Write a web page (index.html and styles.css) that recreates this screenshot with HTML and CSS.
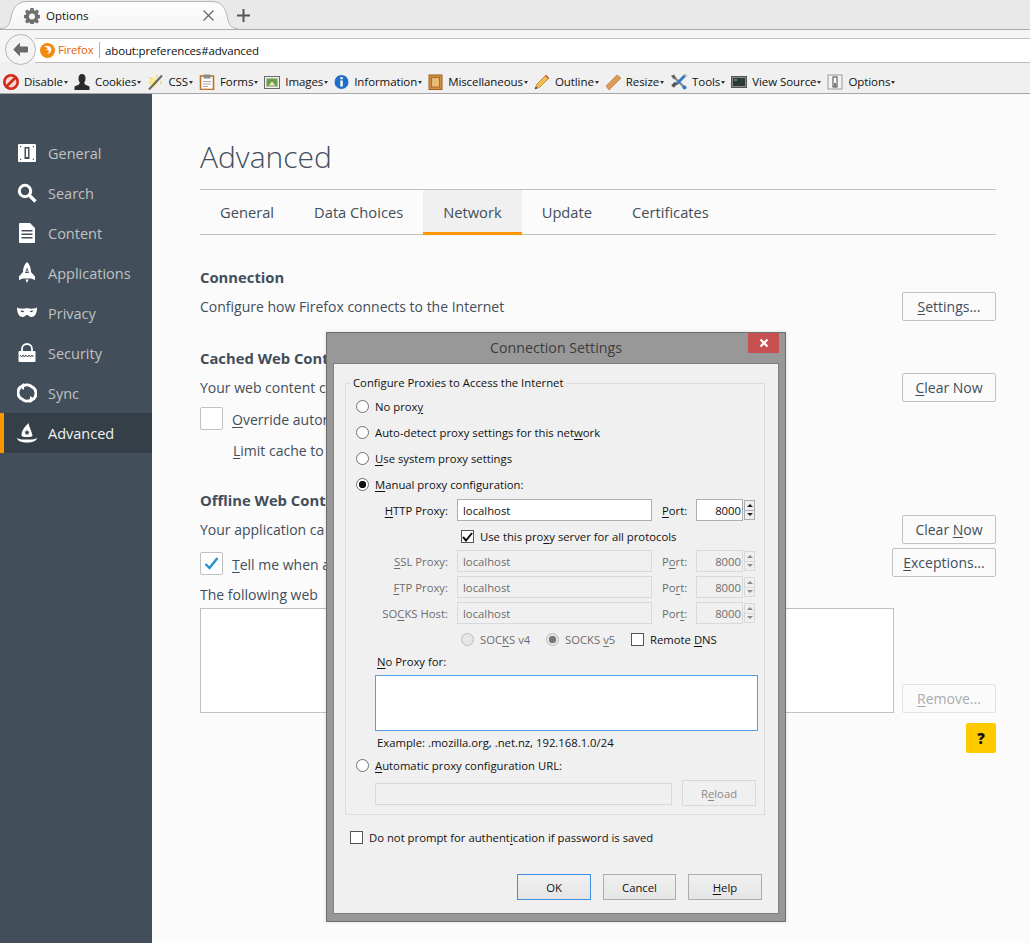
FILE: index.html
```html
<!DOCTYPE html>
<html lang="en">
<head>
    <meta charset="UTF-8">
    <title>Options</title>
    <link rel="stylesheet" href="styles.css">
</head>
<body>
    <div class="tabstrip">
        <div class="tab">
            <svg class="tab-shape" width="238" height="29" viewBox="0 0 238 29">
                <defs><linearGradient id="tabfill" x1="0" y1="0" x2="0" y2="1"><stop offset="0" stop-color="#fdfdfd"/><stop offset="1" stop-color="#f5f5f5"/></linearGradient></defs>
                <path d="M0 29C7 29 9 25 10.500 20C12 12 14 2 27 1.500H212C225 2 226 12 228 20C229.500 25 231 29 238 29Z" fill="url(#tabfill)"/>
                <path d="M0 28.500C7 28.500 9 25 10.500 20C12 12 14 2 27 1.500H212C225 2 226 12 228 20C229.500 25 231 28.500 238 28.500" fill="none" stroke="#b3b7bd"/>
            </svg>
            <svg class="tab-icon" width="16" height="16" viewBox="0 0 16 16"><path fill="#6f6f6f" d="M6.500 0h3l.4 2.200 1.300.6L13 1.500l2 2-1.300 1.900.6 1.300 2.200.4v3l-2.200.4-.6 1.300 1.300 1.800-2 2-1.800-1.300-1.300.6-.4 2.100h-3l-.4-2.100-1.300-.6L3 15.500l-2-2 1.300-1.800-.6-1.300L0 10V7l1.700-.3.6-1.300L1 3.500l2-2 1.800 1.300 1.300-.6zM8 5.500a3 3 0 1 0 0 6 3 3 0 0 0 0-6z"/></svg>
            <span class="tab-title">Options</span>
            <svg class="tab-close" width="11" height="11" viewBox="0 0 11 11"><path d="M.5.5l10 10M10.500.5l-10 10" stroke="#666" stroke-width="1.200"/></svg>
        </div>
        <svg class="new-tab" width="13" height="13" viewBox="0 0 13 13"><path d="M6.500 0v13M0 6.500h13" stroke="#555" stroke-width="2"/></svg>
    </div>

    <div class="navbar">
        <div class="back-btn">
            <svg width="15" height="13" viewBox="0 0 15 13"><path d="M6.500.5L.8 6.500l5.700 6V9h8V4h-8z" fill="#6a6a6a" stroke="#6a6a6a" stroke-linejoin="round"/></svg>
        </div>
        <div class="urlbar">
            <svg class="fx-logo" width="15" height="15" viewBox="0 0 15 15"><circle cx="7.500" cy="7.500" r="7.500" fill="#f4890f"/><path d="M4 3.500c2-1.500 6-1 7 1.500 1 3-1 6-4 6 2-1 2.500-3 1-4-1-.5-2 0-3 0 1-1 2-1.500 3-1.500-1-1-2.500-1.500-4-2z" fill="#fff"/></svg>
            <span class="fx-name">Firefox</span>
            <span class="url-text">about:preferences#advanced</span>
        </div>
    </div>

    <div class="devbar">
        <div class="dev-item"><svg width="16" height="16" viewBox="0 0 16 16"><circle cx="8" cy="8" r="6.700" fill="#f6d8d2" stroke="#d22a1c" stroke-width="2.600"/><path d="M3.500 12.500l9-9" stroke="#d22a1c" stroke-width="2.600"/></svg>Disable<i></i></div>
        <div class="dev-item"><svg width="16" height="16" viewBox="0 0 16 16"><ellipse cx="8" cy="4.500" rx="3.500" ry="4.500" fill="#2b2b2b"/><path d="M6 8h4l1 2.500 4.500 2V16H.5v-3.500L5 10.500z" fill="#2b2b2b"/></svg>Cookies<i></i></div>
        <div class="dev-item"><svg width="16" height="16" viewBox="0 0 16 16"><path d="M1 9l4-6 4 2 2 5-5 4z" fill="#f8ea8e"/><path d="M2 15.500L15 1.500" stroke="#666" stroke-width="2"/><path d="M10 1v3M14 7v3M2 3l2 2" stroke="#e8c93a"/></svg>CSS<i></i></div>
        <div class="dev-item"><svg width="16" height="16" viewBox="0 0 16 16"><rect x="1.500" y="2" width="13" height="13.500" fill="#fdfdfd" stroke="#b9752e" stroke-width="1.600"/><rect x="4.500" y="0.500" width="7" height="4" fill="#8b8b8b"/><path d="M4 7.500h8M4 10h8M4 12.500h5" stroke="#aaa"/></svg>Forms<i></i></div>
        <div class="dev-item"><svg width="16" height="16" viewBox="0 0 16 16"><rect x="0.500" y="2.500" width="15" height="12" fill="#eee" stroke="#6b6b6b"/><rect x="2.500" y="4.500" width="11" height="8" fill="#6f9a4a"/><path d="M4.500 11.500l3.500-4 3.500 4z" fill="#e9e6c3"/></svg>Images<i></i></div>
        <div class="dev-item"><svg width="15" height="16" viewBox="0 0 15 16"><circle cx="7.500" cy="8" r="7" fill="#1f6fc8"/><rect x="6.300" y="6.500" width="2.500" height="6" fill="#fff"/><rect x="6.300" y="3.200" width="2.500" height="2" fill="#fff"/></svg>Information<i></i></div>
        <div class="dev-item"><svg width="15" height="16" viewBox="0 0 15 16"><rect x="1" y="1" width="13" height="14.500" fill="#d58f3f" stroke="#9c6020"/><rect x="3.500" y="3.500" width="8" height="9.500" fill="#e8ba78" stroke="#a86c28"/></svg>Miscellaneous<i></i></div>
        <div class="dev-item"><svg width="16" height="16" viewBox="0 0 16 16"><path d="M1 15l2-5L12 1l3 3-9 9z" fill="#f0c04a" stroke="#a8742a" stroke-width=".7"/><path d="M11 2l3 3 1-1-3-3z" fill="#d9534f"/><path d="M1 15l.8-2.500 1.700 1.700z" fill="#333"/></svg>Outline<i></i></div>
        <div class="dev-item"><svg width="16" height="16" viewBox="0 0 16 16"><path d="M1 12L12 1l4 3L4 16z" fill="#dc9c56" stroke="#b87a38" stroke-width=".7"/></svg>Resize<i></i></div>
        <div class="dev-item"><svg width="17" height="16" viewBox="0 0 17 16"><path d="M2.500 1.500l12 12" stroke="#8a8a8a" stroke-width="2.400"/><path d="M1 2l3-1.500 2 3-2 2z" fill="#666"/><path d="M15 1.500L6.500 10" stroke="#2f78c4" stroke-width="2.800"/><path d="M6 9l-3.500 3.500" stroke="#555" stroke-width="3.600"/><circle cx="14.500" cy="13.500" r="2" fill="#2f78c4"/><path d="M13 .5l3.500 3 .5-2.500-1-1z" fill="#bbb"/></svg>Tools<i></i></div>
        <div class="dev-item"><svg width="16" height="16" viewBox="0 0 16 16"><rect x="0.500" y="2.500" width="15" height="11" fill="#8a8a8a" stroke="#555"/><rect x="2" y="4" width="12" height="8" fill="#2a3a34"/><path d="M3 6h3" stroke="#9ccc65"/></svg>View Source<i></i></div>
        <div class="dev-item"><svg width="16" height="16" viewBox="0 0 16 16"><rect x="1" y="1" width="14" height="14" fill="#f4f4f4" stroke="#9a9a9a"/><rect x="6" y="3" width="4" height="10" fill="#fff" stroke="#444"/><rect x="7" y="9" width="2" height="4" fill="#777"/></svg>Options<i></i></div>
    </div>

    <div class="prefs">
        <nav class="sidebar">
            <div class="cat">
                <svg width="20" height="20" viewBox="0 0 20 20"><path fill-rule="evenodd" d="M2 1h16a1 1 0 0 1 1 1v16a1 1 0 0 1-1 1H2a1 1 0 0 1-1-1V2a1 1 0 0 1 1-1zm5.500 3v12h5V4zm1.500 1.500h2V14H9zM3 3v1.200h1.200V3zm12.800 0v1.200H17V3zM3 15.800V17h1.200v-1.200zm12.800 0V17H17v-1.200z" fill="#fff"/></svg>
                General
            </div>
            <div class="cat">
                <svg width="20" height="20" viewBox="0 0 20 20"><circle cx="8" cy="8" r="5.700" fill="none" stroke="#fff" stroke-width="3"/><path d="M12.500 12.500l6 6" stroke="#fff" stroke-width="3.400"/></svg>
                Search
            </div>
            <div class="cat">
                <svg width="20" height="20" viewBox="0 0 20 20"><path fill-rule="evenodd" d="M3 0h10l5 5v14a1 1 0 0 1-1 1H3a1 1 0 0 1-1-1V1a1 1 0 0 1 1-1zm1.500 7v1.500h11V7zm0 3.500V12h11v-1.500zm0 3.500v1.500h11V14z" fill="#fff"/></svg>
                Content
            </div>
            <div class="cat">
                <svg width="20" height="22" viewBox="0 0 20 22"><path fill-rule="evenodd" d="M10 0c2.500 2 4 6 4 10l4 4.500V18l-4-1.500H6L2 18v-3.500L6 10c0-4 1.500-8 4-10zm0 5.500L8 11h4zm0 2.500l.8 2H9.200z" fill="#fff"/><path d="M8.500 17.500h3L10 21z" fill="#fff"/></svg>
                Applications
            </div>
            <div class="cat">
                <svg width="20" height="20" viewBox="0 0 20 20"><path fill-rule="evenodd" d="M0 4.500c3 1.500 7 1.500 10 .5 3 1 7 1 10-.5 0 5.500-2 9.500-5.500 9.500-2.500 0-3-2-4.500-2s-2 2-4.500 2C2 14 0 10 0 4.500zm3.500 3.500c.8 1.400 2.800 1.500 3.800.5-1-1-2.800-1.300-3.800-.5zm13 0c-1-.8-2.800-.5-3.800.5 1 1 3 .9 3.800-.5z" fill="#fff"/></svg>
                Privacy
            </div>
            <div class="cat">
                <svg width="20" height="20" viewBox="0 0 20 20"><path d="M5 9V6a5 5 0 0 1 10 0v3" fill="none" stroke="#fff" stroke-width="1.800"/><rect x="1.500" y="8" width="17" height="11" rx="1" fill="#fff"/><path d="M3 12l1.500 2 1.500-2 1.500 2 1.500-2 1.500 2 1.500-2 1.500 2 1.500-2 1.500 2" fill="none" stroke="#424f5a"/></svg>
                Security
            </div>
            <div class="cat">
                <svg width="20" height="20" viewBox="0 0 20 20"><path d="M15.500 4.500A7.500 7.500 0 0 0 6 3" fill="none" stroke="#fff" stroke-width="3"/><path d="M4.500 16A7.500 7.500 0 0 1 3.500 4" fill="none" stroke="#fff" stroke-width="3"/><path d="M4.500 15.500A7.500 7.500 0 0 0 14 17" fill="none" stroke="#fff" stroke-width="3"/><path d="M15.500 4A7.500 7.500 0 0 1 16.500 16" fill="none" stroke="#fff" stroke-width="3"/><path d="M7 0v7L2 3.500zM13 20v-7l5 3.500z" fill="#fff"/></svg>
                Sync
            </div>
            <div class="cat selected">
                <svg width="20" height="20" viewBox="0 0 20 20"><path fill-rule="evenodd" d="M12 0c-1 2 2.500 7 3.500 12.500.3 2-11 2-11 0C4.500 7.500 8 3 12 0zm-2 6.500l-.8 2-2 .2 1.500 1.300-.4 2 1.700-1.100 1.700 1.100-.4-2 1.500-1.300-2-.2z" fill="#fff"/><path d="M0 14.500c1 2 5 2 10 2s9 0 10-2c0 3.500-4 5-10 5s-10-1.500-10-5z" fill="#fff"/></svg>
                Advanced
            </div>
        </nav>

        <main class="pane">
            <h1 class="pane-title">Advanced</h1>
            <div class="pane-tabs">
                <div class="pane-tab">General</div>
                <div class="pane-tab">Data Choices</div>
                <div class="pane-tab active">Network</div>
                <div class="pane-tab">Update</div>
                <div class="pane-tab">Certificates</div>
            </div>

            <h2 class="group-title first">Connection</h2>
            <div class="row">
                <span>Configure how Firefox connects to the Internet</span>
                <button class="pref-btn"><u>S</u>ettings...</button>
            </div>

            <h2 class="group-title">Cached Web Cont</h2>
            <div class="row row-cache">
                <span>Your web content c</span>
                <button class="pref-btn"><u>C</u>lear Now</button>
            </div>
            <div class="check-row">
                <span class="pref-check"></span>
                <span class="check-label"><u>O</u>verride autor</span>
            </div>
            <div class="limit-row"><u>L</u>imit cache to</div>

            <h2 class="group-title">Offline Web Cont</h2>
            <div class="row row-cache">
                <span>Your application ca</span>
                <button class="pref-btn">Clear <u>N</u>ow</button>
            </div>
            <div class="row row-tell">
                <div class="check-row inline">
                    <span class="pref-check">
                        <svg width="15" height="13" viewBox="0 0 15 13"><path d="M1.500 7l4 4 8-10" fill="none" stroke="#2a8fd0" stroke-width="2.400"/></svg>
                    </span>
                    <span class="check-label"><u>T</u>ell me when a</span>
                </div>
                <button class="pref-btn btn-exceptions"><u>E</u>xceptions...</button>
            </div>
            <div class="following">The following web</div>
            <div class="list-row">
                <div class="listbox"></div>
                <button class="pref-btn" disabled><u>R</u>emove...</button>
            </div>
            <div class="help-row"><button class="help-btn">?</button></div>
        </main>
    </div>

    <div class="dialog">
        <div class="dialog-title">
            <span>Connection Settings</span>
            <div class="dialog-close">
                <svg width="10" height="10" viewBox="0 0 10 10"><path d="M1.500 1.500l7 7M8.500 1.500l-7 7" stroke="#fff" stroke-width="2"/></svg>
            </div>
        </div>
        <div class="dialog-body">
            <fieldset class="proxy-box">
                <legend>Configure Proxies to Access the Internet</legend>
                <div class="radio-row"><span class="radio"></span><span>No prox<u>y</u></span></div>
                <div class="radio-row"><span class="radio"></span><span>Auto-detect proxy settings for this net<u>w</u>ork</span></div>
                <div class="radio-row"><span class="radio"></span><span><u>U</u>se system proxy settings</span></div>
                <div class="radio-row"><span class="radio on"></span><span><u>M</u>anual proxy configuration:</span></div>

                <div class="proxy-row http">
                    <label><u>H</u>TTP Proxy:</label>
                    <input class="field" type="text" value="localhost">
                    <label class="port"><u>P</u>ort:</label>
                    <input class="field port-field" type="text" value="8000">
                    <span class="spin"><i class="up"></i><i class="down"></i></span>
                </div>
                <div class="use-all">
                    <span class="box"><svg width="11" height="10" viewBox="0 0 11 10"><path d="M1 5l3 3.500L10 1" fill="none" stroke="#111" stroke-width="2"/></svg></span>
                    <span>Use this pro<u>x</u>y server for all protocols</span>
                </div>
                <div class="proxy-row off">
                    <label><u>S</u>SL Proxy:</label>
                    <input class="field" type="text" value="localhost" disabled>
                    <label class="port">P<u>o</u>rt:</label>
                    <input class="field port-field" type="text" value="8000" disabled>
                    <span class="spin"><i class="up"></i><i class="down"></i></span>
                </div>
                <div class="proxy-row off">
                    <label><u>F</u>TP Proxy:</label>
                    <input class="field" type="text" value="localhost" disabled>
                    <label class="port">Po<u>r</u>t:</label>
                    <input class="field port-field" type="text" value="8000" disabled>
                    <span class="spin"><i class="up"></i><i class="down"></i></span>
                </div>
                <div class="proxy-row off">
                    <label>SO<u>C</u>KS Host:</label>
                    <input class="field" type="text" value="localhost" disabled>
                    <label class="port">Por<u>t</u>:</label>
                    <input class="field port-field" type="text" value="8000" disabled>
                    <span class="spin"><i class="up"></i><i class="down"></i></span>
                </div>
                <div class="socks-row">
                    <span class="radio dim"></span><span class="dim-text s4">SOC<u>K</u>S v4</span>
                    <span class="radio dim on"></span><span class="dim-text s5">SOCKS <u>v</u>5</span>
                    <span class="box"></span><span>Remote <u>D</u>NS</span>
                </div>
                <div class="noproxy-label"><u>N</u>o Proxy for:</div>
                <textarea class="noproxy"></textarea>
                <div class="example">Example: .mozilla.org, .net.nz, 192.168.1.0/24</div>
                <div class="radio-row auto"><span class="radio"></span><span><u>A</u>utomatic proxy configuration URL:</span></div>
                <div class="auto-row">
                    <input class="field auto-url" type="text" disabled>
                    <button class="dlg-btn reload" disabled>R<u>e</u>load</button>
                </div>
            </fieldset>
            <div class="noauth">
                <span class="box"></span>
                <span>Do not prompt for authent<u>i</u>cation if password is saved</span>
            </div>
            <div class="dialog-buttons">
                <button class="dlg-btn default">OK</button>
                <button class="dlg-btn cancel">Cancel</button>
                <button class="dlg-btn"><u>H</u>elp</button>
            </div>
        </div>
    </div>
</body>
</html>
```

FILE: styles.css
```css
html, body {
    margin: 0;
    padding: 0;
    height: 943px;
    overflow: hidden;
}
body {
    position: relative;
    display: flex;
    flex-direction: column;
    font-family: "Open Sans", "Noto Sans", sans-serif;
    font-size: 11.3px;
    color: #111;
    background-color: #fbfbfb;
}
button, input, textarea {
    font-family: inherit;
    box-sizing: border-box;
    margin: 0;
}
u {
    text-underline-offset: 2px;
}

/* browser chrome */
.tabstrip {
    height: 29px;
    flex: none;
    display: flex;
    align-items: center;
    background-color: #e9e9e9;
    border-bottom: 1px solid #a9adb3;
}
.tab {
    position: relative;
    width: 228px;
    height: 29px;
    display: flex;
    align-items: center;
    padding: 2px 0 0 24px;
    box-sizing: border-box;
}
.tab-shape {
    position: absolute;
    left: 0;
    top: 0;
}
.tab-icon, .tab-title, .tab-close {
    position: relative;
}
.tab-title {
    margin-left: 6px;
    width: 157px;
    font-size: 11.5px;
}
.new-tab {
    margin-left: 9px;
    margin-top: 1px;
}
.navbar {
    height: 32px;
    flex: none;
    display: flex;
    align-items: center;
    position: relative;
    background-color: #f5f5f5;
}
.back-btn {
    position: absolute;
    left: 5px;
    top: 4px;
    width: 31px;
    height: 31px;
    box-sizing: border-box;
    border: 1px solid #b5b5b5;
    border-radius: 50%;
    background-color: #f4f4f4;
    display: flex;
    align-items: center;
    justify-content: center;
}
.urlbar {
    margin: 8px 0 0 35px;
    height: 23px;
    flex: 1;
    display: flex;
    align-items: center;
    padding-left: 5px;
    background-color: #fff;
    border-top: 1px solid #bcc3cb;
    border-bottom: 1px solid #bcbcbc;
}
.fx-name {
    margin-left: 3px;
    width: 41px;
    color: #e66000;
    height: 16px;
    line-height: 16px;
    letter-spacing: -0.1px;
    border-right: 1px solid #e3a978;
}
.url-text {
    margin-left: 5px;
    font-size: 11.5px;
    letter-spacing: -0.15px;
}
.devbar {
    height: 32px;
    flex: none;
    display: flex;
    align-items: center;
    padding: 8px 0 0 3px;
    background-color: #f0f0f0;
    border-bottom: 1px solid #a5a5a5;
    box-sizing: border-box;
    gap: 6px;
    font-size: 11.5px;
    letter-spacing: -0.08px;
}
.dev-item {
    display: flex;
    align-items: center;
    gap: 5px;
}
.dev-item i {
    display: block;
    margin-left: -4px;
    margin-top: 2px;
    border: 2px solid transparent;
    border-top: 3px solid #333;
    border-bottom: 0;
}

/* preferences */
.prefs {
    flex: 1;
    display: flex;
    min-height: 0;
}
.sidebar {
    width: 152px;
    flex: none;
    padding-top: 39px;
    background-color: #424f5a;
    box-sizing: border-box;
}
.cat {
    height: 40px;
    display: flex;
    align-items: center;
    gap: 11px;
    padding-left: 17px;
    font-size: 14.5px;
    color: #c1c1c1;
    box-sizing: border-box;
}
.cat.selected {
    background-color: #343f48;
    border-left: 4px solid #ff9500;
    padding-left: 13px;
    color: #f2f2f2;
}
.pane {
    flex: 1;
    padding: 0 34px 0 48px;
    font-size: 14px;
    color: #424e5a;
}
.pane-title {
    margin: 0;
    height: 96px;
    box-sizing: border-box;
    padding-top: 40px;
    font-size: 30px;
    line-height: 46px;
    font-weight: 300;
    border-bottom: 1px solid #c1c1c1;
}
.pane-tabs {
    display: flex;
    height: 45px;
    border-bottom: 1px solid #c1c1c1;
    box-sizing: border-box;
}
.pane-tab {
    padding: 0 20px;
    line-height: 45px;
    height: 45px;
    box-sizing: border-box;
    font-size: 14.7px;
}
.pane-tab.active {
    background-color: #f0f0f0;
    border-bottom: 3px solid #ff9500;
}
.group-title {
    margin: 25px 0 0;
    height: 24px;
    line-height: 24px;
    font-size: 14.8px;
    font-weight: 700;
    white-space: nowrap;
}
.group-title.first {
    margin-top: 30px;
}
.row {
    display: flex;
    justify-content: space-between;
    align-items: center;
    white-space: nowrap;
}
.first + .row {
    margin-top: 3px;
}
.row-cache {
    margin-top: 3px;
}
.row-tell {
    margin-top: 4px;
}
.pref-btn {
    width: 94px;
    height: 29px;
    padding: 0;
    font-size: 14px;
    color: #424e5a;
    background-color: #fbfbfb;
    border: 1px solid #c1c1c1;
    border-radius: 2px;
}
.pref-btn:disabled {
    color: #a8adb2;
    border-color: #e2e2e2;
}
.btn-exceptions {
    width: 104px;
}
.check-row {
    display: flex;
    align-items: center;
    gap: 9px;
    height: 23px;
    margin-top: 5px;
    white-space: nowrap;
}
.check-row.inline {
    margin-top: 1px;
}
.check-label {
    padding-top: 2px;
}
.pref-check {
    width: 23px;
    height: 23px;
    box-sizing: border-box;
    border: 1px solid #c1c1c1;
    border-radius: 2px;
    background-color: #fff;
    display: flex;
    align-items: center;
    justify-content: center;
}
.limit-row {
    margin: 9px 0 1px 33px;
    height: 24px;
    line-height: 24px;
}
.following {
    margin-top: 4px;
    height: 26px;
    line-height: 27px;
    white-space: nowrap;
}
.list-row {
    margin-top: 1px;
    display: flex;
    align-items: flex-end;
    gap: 8px;
}
.listbox {
    flex: 1;
    height: 105px;
    box-sizing: border-box;
    background-color: #fff;
    border: 1px solid #c1c1c1;
}
.help-row {
    display: flex;
    justify-content: flex-end;
    margin-top: 10px;
}
.help-btn {
    width: 30px;
    height: 30px;
    padding: 0;
    border: 0;
    border-radius: 2px;
    background-color: #ffcb00;
    color: #111;
    font-size: 15px;
    font-weight: 800;
}

/* connection settings window */
.dialog {
    position: absolute;
    left: 326px;
    top: 332px;
    width: 460px;
    height: 590px;
    box-sizing: border-box;
    border: 1px solid #6d6d6d;
    background-color: #989898;
    padding: 0 6px 7px;
    display: flex;
    flex-direction: column;
    box-shadow: 0 0 3px rgba(0,0,0,0.15);
}
.dialog-title {
    height: 30px;
    flex: none;
    display: flex;
    align-items: center;
    justify-content: center;
    position: relative;
    padding-bottom: 2px;
    box-sizing: border-box;
    font-size: 14.2px;
    color: #3c3c3c;
}
.dialog-close {
    position: absolute;
    right: 0;
    top: 0;
    width: 31px;
    height: 20px;
    background-color: #c75050;
    display: flex;
    align-items: center;
    justify-content: center;
}
.dialog-body {
    flex: 1;
    background-color: #f0f0f0;
    border: 1px solid #7f7f7f;
    box-sizing: border-box;
    padding: 11px 13px 0 11px;
    display: flex;
    flex-direction: column;
    min-height: 0;
}
.proxy-box {
    margin: 0;
    padding: 2px 0 0 10px;
    border: 1px solid #dcdcdc;
    height: 440px;
    box-sizing: border-box;
    min-width: 0;
}
.proxy-box legend {
    margin-left: -6px;
    padding: 0 3px;
    line-height: 16px;
}
.radio-row {
    height: 26px;
    display: flex;
    align-items: center;
    gap: 6px;
}
.radio {
    width: 13px;
    height: 13px;
    box-sizing: border-box;
    border: 1px solid #707070;
    border-radius: 50%;
    background-color: #fff;
    flex: none;
}
.radio.on {
    background: radial-gradient(circle, #111 0 3.400px, #fff 4px);
}
.radio.dim {
    border-color: #bcbcbc;
    background-color: #e6e6e6;
}
.radio.dim.on {
    background: radial-gradient(circle, #777 0 3.400px, #e6e6e6 4px);
}
.proxy-row {
    height: 22px;
    display: grid;
    grid-template-columns: 111px 195px 44px 47px 12px;
    align-items: center;
    margin-top: 4px;
    margin-left: -10px;
}
.proxy-row.http {
    margin-top: 2px;
}
.proxy-row label:first-child {
    width: 102px;
    text-align: right;
}
.proxy-row label.port {
    padding-left: 10px;
}
.field {
    height: 22px;
    padding: 0 5px;
    font-size: 11.3px;
    color: #111;
    background-color: #fff;
    border: 1px solid #adadad;
    border-radius: 0;
    outline: none;
}
.field:disabled {
    color: #6d6d6d;
    background-color: #f0f0f0;
    border-color: #d9d9d9;
}
.off label {
    color: #6d6d6d;
}
.port-field {
    text-align: right;
    padding-right: 1px;
    width: 47px;
}
.spin {
    display: flex;
    flex-direction: column;
    width: 11px;
    margin-left: 1px;
    height: 20px;
    border: 1px solid #adadad;
    box-sizing: border-box;
    background-color: #efefef;
}
.spin i {
    flex: 1;
    display: flex;
    align-items: center;
    justify-content: center;
}
.spin i::before {
    content: "";
    border: 3px solid transparent;
}
.spin .up::before {
    border-bottom: 3px solid #222;
    border-top: 0;
}
.spin .down {
    border-top: 1px solid #adadad;
}
.spin .down::before {
    border-top: 3px solid #222;
    border-bottom: 0;
}
.off .spin {
    border-color: #d9d9d9;
}
.off .spin .down {
    border-top-color: #d9d9d9;
}
.off .spin .up::before {
    border-bottom-color: #8a8a8a;
}
.off .spin .down::before {
    border-top-color: #8a8a8a;
}
.box {
    width: 13px;
    height: 13px;
    flex: none;
    box-sizing: border-box;
    border: 1px solid #555;
    background-color: #fff;
    display: flex;
    align-items: center;
    justify-content: center;
}
.use-all {
    display: flex;
    align-items: center;
    gap: 6px;
    height: 25px;
    margin: 3px 0 0 105px;
}
.use-all + .proxy-row {
    margin-top: 1px;
}
.socks-row {
    display: flex;
    align-items: center;
    height: 18px;
    margin: 6px 0 0 105px;
}
.socks-row .dim-text {
    margin-left: 6px;
    color: #6d6d6d;
}
.s4, .s5 {
    width: 66px;
}
.socks-row .box {
    margin-right: 6px;
}
.noproxy-label {
    height: 20px;
    line-height: 20px;
    margin: 4px 0 0 21px;
}
.noproxy {
    display: block;
    width: 383px;
    height: 56px;
    margin: 3px 0 0 19px;
    border: 1px solid #569de5;
    border-radius: 0;
    outline: none;
    resize: none;
    background-color: #fff;
}
.example {
    height: 21px;
    line-height: 22px;
    margin: 1px 0 0 21px;
}
.radio-row.auto {
    height: 24px;
}
.auto-row {
    display: flex;
    align-items: flex-start;
    margin: 3px 0 0 19px;
    height: 26px;
}
.auto-url {
    width: 297px;
    margin-top: 3px;
}
.reload {
    margin-left: 10px;
}
.dlg-btn {
    width: 74px;
    height: 26px;
    padding: 0;
    font-size: 11.3px;
    color: #111;
    border: 1px solid #adadad;
    border-radius: 0;
    background: linear-gradient(#f0f0f0, #e5e5e5);
}
.dlg-btn:disabled {
    background: #f0f0f0;
    border-color: #d9d9d9;
    color: #8a8a8a;
}
.dlg-btn.default {
    border-color: #3c8fe0;
}
.dlg-btn.cancel {
    width: 73px;
}
.noauth {
    display: flex;
    align-items: center;
    gap: 6px;
    margin: 13px 0 0 5px;
    height: 18px;
}
.dialog-buttons {
    margin-top: 28px;
    display: flex;
    justify-content: flex-end;
    gap: 12px;
    padding-right: 3px;
}
```
